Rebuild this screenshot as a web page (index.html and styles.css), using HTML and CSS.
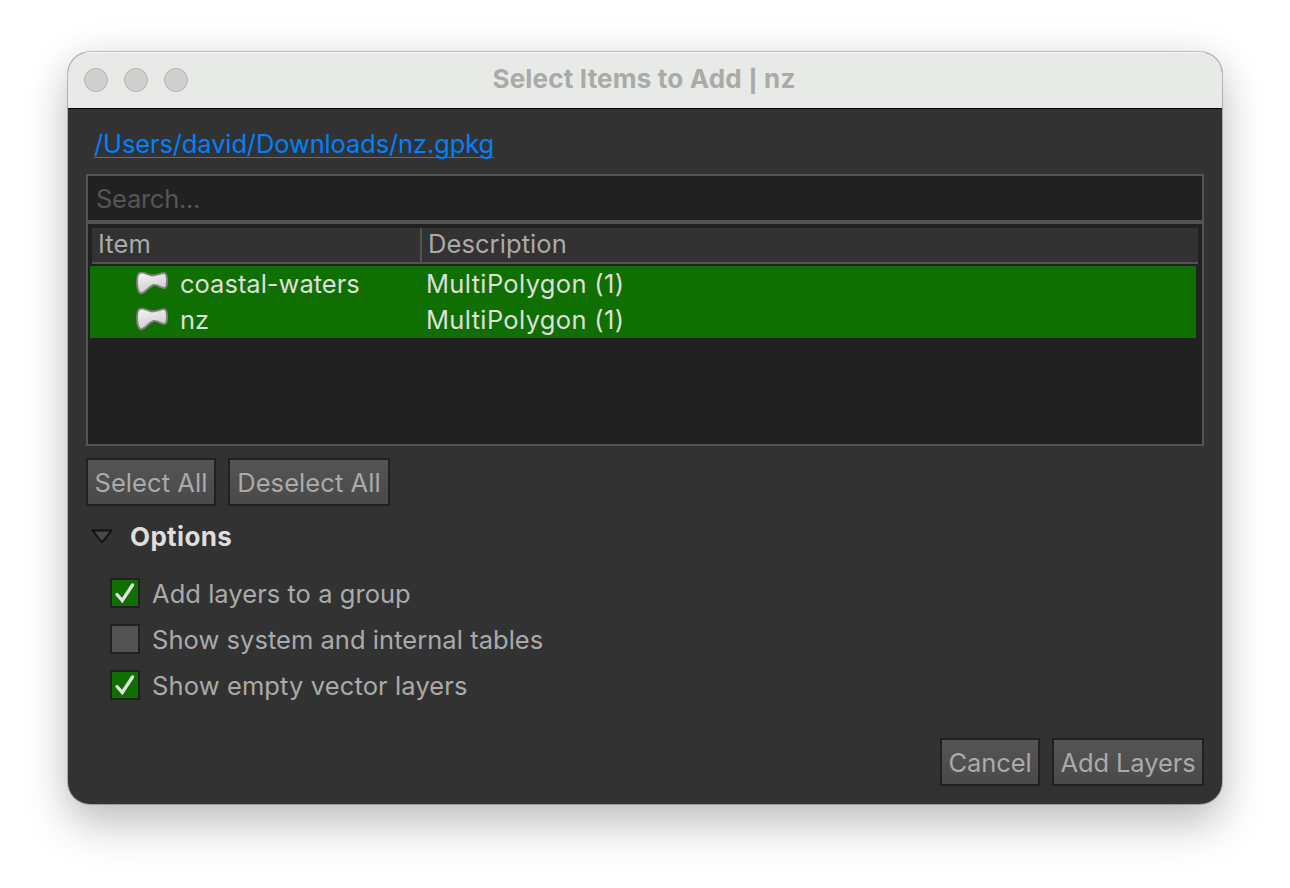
FILE: index.html
```html
<!DOCTYPE html>
<html lang="en">
<head>
<meta charset="utf-8">
<title>Select Items to Add | nz</title>
<link rel="stylesheet" href="styles.css">
</head>
<body>
<svg class="defs" width="0" height="0">
  <defs>
    <linearGradient id="shape" x1="0" y1="0" x2="0.4" y2="1"><stop offset="0" stop-color="#f6f6f6"/><stop offset="1" stop-color="#cdcdcd"/></linearGradient>
    <symbol id="polygon" viewBox="0 0 32 24"><path d="M4 1.800C8 .6 11 3.800 16 4.500C20 4.500 24 2.600 27.500 2C30 1.800 31 5 31 9C31 14 30.600 17.300 28 17C24.500 16.300 21 13.300 17.500 14C13 15.500 10 21 6 22.200C2.500 23 1 17 1 11C1 6 1.500 2.700 4 1.800Z" fill="url(#shape)" stroke="#808080" stroke-width="1.9"/></symbol>
    <symbol id="check" viewBox="0 0 26 26"><path d="M5 14.500L10.300 20.500L20.500 5" fill="none" stroke="#e2e2e2" stroke-width="3.300" stroke-linecap="round" stroke-linejoin="miter"/></symbol>
  </defs>
</svg>
<main class="window">
  <header class="titlebar">
    <div class="lights"><i class="light"></i><i class="light"></i><i class="light"></i></div>
    <h1 class="title">Select Items to Add <span class="bar">|</span> nz</h1>
  </header>
  <div class="content">
    <div class="path"><a class="link">/Users/david/Downloads/nz.gpkg</a></div>
    <div class="search">Search...</div>
    <div class="tree">
      <div class="head"><div class="col-item">Item</div><div class="col-desc">Description</div></div>
      <div class="row"><svg class="poly"><use href="#polygon"/></svg><div class="name">coastal-waters</div><span class="multi">MultiPolygon (1)</span></div>
      <div class="row"><svg class="poly"><use href="#polygon"/></svg><div class="name">nz</div><span class="multi">MultiPolygon (1)</span></div>
    </div>
    <div class="actions"><button class="btn select">Select All</button><button class="btn deselect">Deselect All</button></div>
    <div class="options"><svg class="tri" viewBox="0 0 22 16"><path d="M1.500 1.500H20.500L11 13.500Z" fill="#484848" stroke="#111" stroke-width="2" stroke-linejoin="round"/></svg><h2 class="group">Options</h2></div>
    <div class="checks">
      <label class="option"><span class="box on"><svg class="mark"><use href="#check"/></svg></span><span>Add layers to a group</span></label>
      <label class="option"><span class="box"></span><span>Show system and internal tables</span></label>
      <label class="option"><span class="box on"><svg class="mark"><use href="#check"/></svg></span><span class="vector">Show empty vector layers</span></label>
    </div>
    <footer class="footer"><button class="btn cancel">Cancel</button><button class="btn add">Add Layers</button></footer>
  </div>
</main>
</body>
</html>
```
FILE: styles.css
```css
* { box-sizing: border-box; }
body { margin: 0; height: 888px; overflow: hidden; background: #fff; padding: 52px 68px 0; font-family: Inter, sans-serif; font-size: 25.5px; color: #aaa; white-space: nowrap; }
.defs { position: absolute; }
.window { width: 1154px; height: 752px; border-radius: 22px; background: #323232; overflow: hidden; box-shadow: 0 0 0 1px rgba(0,0,0,.22), 0 22px 44px rgba(0,0,0,.22), 0 0 40px rgba(0,0,0,.08); }
.titlebar { height: 57px; background: #e8eae7; border-bottom: 1px solid #000; border-top: 1px solid #f7f8f7; display: grid; grid-template-columns: 140px 1fr 142px; align-items: start; }
.lights { display: flex; gap: 16px; padding: 15px 0 0 16px; }
.light { width: 24px; height: 24px; border-radius: 50%; background: #cfd0ce; border: 1px solid #b2b3b1; }
.title { margin: 0; font-size: 26px; line-height: 51px; font-weight: 700; letter-spacing: .19px; text-align: center; color: #aaaba8; }
.bar { display: inline-block; line-height: 20px; font-size: 22px; font-weight: 800; font-feature-settings: "calt" 0; transform: translateY(1px); padding: 0 .4px; }
.content { padding: 0 18px; }
.path { height: 65px; padding: 16px 8px 0; line-height: 38px; }
.link { color: #0080ff; letter-spacing: -.13px; text-decoration: underline; text-decoration-thickness: 1px; text-underline-offset: 4px; text-decoration-skip-ink: none; }
.search { height: 48px; border: 2px solid #535353; background: #212121; padding-left: 8px; line-height: 46px; letter-spacing: -.28px; color: #555; }
.tree { height: 224px; border: 2px solid #535353; background: #212121; padding: 4px 6px 0 2px; }
.head { height: 36px; margin: 0 -2px 2px 2px; display: flex; background: #323232; border-bottom: 2px solid #535353; line-height: 31px; letter-spacing: .08px; }
.col-item { width: 330px; padding-left: 6px; border-right: 2px solid #535353; }
.col-desc { padding-left: 6px; }
.row { height: 36px; display: flex; background: #0f6f00; color: #dedede; line-height: 35px; }
.poly { width: 32px; height: 24px; margin: 5px 12px 0 46px; }
.name { width: 246px; }
.multi { letter-spacing: .34px; }
.actions { display: flex; gap: 12px; padding-top: 12px; }
.btn { height: 48px; padding: 0; border: 2px solid #212121; background: linear-gradient(#555, #494949); color: #aaa; font: 25.5px/46px Inter, sans-serif; letter-spacing: .08px; }
.select { width: 130px; }
.deselect { width: 162px; }
.options { height: 72px; padding: 8px 0 0 5px; display: flex; }
.tri { width: 22px; height: 16px; margin: 15px 17px 0 0; }
.group { margin: 0; font-size: 26px; line-height: 46px; letter-spacing: .35px; color: #dedede; }
.checks { display: grid; gap: 16px; padding-left: 24px; }
.option { height: 30px; display: flex; gap: 12px; line-height: 32px; letter-spacing: .04px; }
.vector { letter-spacing: .12px; }
.box { width: 30px; height: 30px; border: 2px solid #212121; background: #535353; }
.on { background: #0f6f00; }
.mark { display: block; width: 26px; height: 26px; }
.footer { display: flex; justify-content: flex-end; gap: 12px; padding-top: 38px; }
.cancel { width: 100px; letter-spacing: -.1px; }
.add { width: 152px; letter-spacing: -.1px; }
```
